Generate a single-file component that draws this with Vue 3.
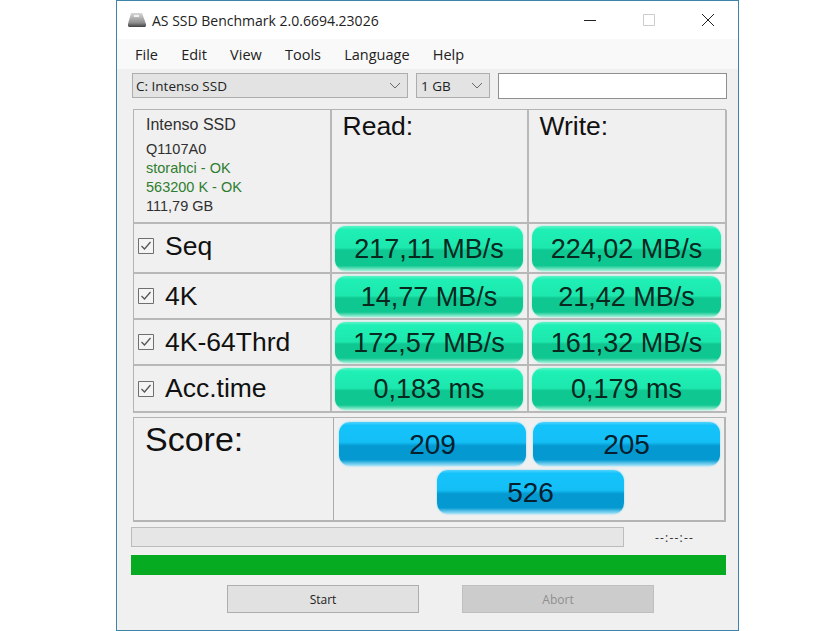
<script setup>
const rows = [
  { name: 'Seq', read: '217,11 MB/s', write: '224,02 MB/s', cls: 'r1' },
  { name: '4K', read: '14,77 MB/s', write: '21,42 MB/s', cls: 'r2' },
  { name: '4K-64Thrd', read: '172,57 MB/s', write: '161,32 MB/s', cls: 'r3' },
  { name: 'Acc.time', read: '0,183 ms', write: '0,179 ms', cls: 'r4' },
]
const menu = ['File', 'Edit', 'View', 'Tools', 'Language', 'Help']
</script>

<template>
  <div class="page">
    <div class="window">
      <header class="title">
        <svg class="appicon" width="20" height="16" viewBox="0 0 20 16">
          <defs>
            <linearGradient id="disk" x1="0" y1="0" x2="0" y2="1">
              <stop offset="0" stop-color="#d8d8d8" />
              <stop offset="0.7" stop-color="#8d8d8d" />
              <stop offset="1" stop-color="#3f3f3f" />
            </linearGradient>
          </defs>
          <path d="M4 1h11l4 11v2l-1 1H2l-1-1v-2z" fill="url(#disk)" />
          <path d="M7 3h5v2H7z" fill="#f2f2f2" />
        </svg>
        <span class="title-text">AS SSD Benchmark 2.0.6694.23026</span>
        <div class="controls">
          <svg width="14" height="14" viewBox="0 0 14 14"><path d="M1 7.500h12" stroke="#222" fill="none" /></svg>
          <svg width="14" height="14" viewBox="0 0 14 14"><path d="M1.500 1.500h11v11h-11z" stroke="#ccc" fill="none" /></svg>
          <svg width="14" height="14" viewBox="0 0 14 14"><path d="M1 1l12 12M13 1L1 13" stroke="#222" fill="none" /></svg>
        </div>
      </header>
      <nav class="menu"><span v-for="m in menu" :key="m">{{ m }}</span></nav>
      <main class="body">
        <div class="selectors">
          <div class="combo drive"><span>C: Intenso SSD</span><svg width="12" height="7" viewBox="0 0 12 7"><path d="M1 1l5 5 5-5" stroke="#666" fill="none" /></svg></div>
          <div class="combo size"><span>1 GB</span><svg width="12" height="7" viewBox="0 0 12 7"><path d="M1 1l5 5 5-5" stroke="#666" fill="none" /></svg></div>
          <div class="textbox"></div>
        </div>

        <section class="grid">
          <div class="cell info">
            <div class="model">Intenso SSD</div>
            <div>Q1107A0</div>
            <div class="ok">storahci - OK</div>
            <div class="ok">563200 K - OK</div>
            <div>111,79 GB</div>
          </div>
          <div class="cell head">Read:</div>
          <div class="cell head">Write:</div>
          <template v-for="r in rows" :key="r.name">
            <div class="cell label" :class="r.cls">
              <svg class="check" width="16" height="16" viewBox="0 0 16 16">
                <path d="M.5.500h15v15H.500z" fill="#f4f4f4" stroke="#6f6f6f" />
                <path d="M3.500 8l3 3 6-7" fill="none" stroke="#555" stroke-width="1.300" />
              </svg>
              <span>{{ r.name }}</span>
            </div>
            <div class="cell val"><div class="pill green">{{ r.read }}</div></div>
            <div class="cell val"><div class="pill green">{{ r.write }}</div></div>
          </template>
        </section>

        <section class="score">
          <div class="score-label">Score:</div>
          <div class="score-vals">
            <div class="pill blue">209</div>
            <div class="pill blue">205</div>
            <div class="pill blue total">526</div>
          </div>
        </section>

        <div class="progress-row">
          <div class="progress"></div>
          <span class="time">--:--:--</span>
        </div>
        <div class="bar"></div>
        <div class="buttons">
          <div class="btn">Start</div>
          <div class="btn off">Abort</div>
        </div>
      </main>
    </div>
  </div>
</template>

<style>
html, body { margin: 0; background: #fff; }
</style>

<style scoped>
.page { width: 819px; height: 631px; overflow: hidden; position: relative; background: #fff; }
.window {
  box-sizing: border-box; width: 623px; height: 631px; margin-left: 116px;
  border: 1px solid #3d84a8; background: #f0f0f0;
  display: flex; flex-direction: column;
  font-family: "Open Sans", "Noto Sans", sans-serif; color: #222;
}
.title { height: 38px; background: #fff; display: flex; align-items: center; padding-left: 10px; flex: none; }
.appicon { margin-right: 5px; }
.title-text { font-size: 14px; color: #222; }
.controls { margin-left: auto; display: flex; gap: 45px; padding-right: 23px; }
.menu { height: 30px; background: #f9f9f9; display: flex; align-items: center; gap: 23.200px; padding-left: 18px; font-size: 14.500px; flex: none; }
.body { padding: 4px 11px 0 14px; flex: 1; }
.selectors { display: flex; gap: 8px; height: 26px; margin-left: 1px; }
.combo {
  box-sizing: border-box; height: 25px; background: #e3e3e3; border: 1px solid #adadad;
  display: flex; align-items: center; justify-content: space-between;
  padding: 0 6px 0 3px; font-size: 13.500px;
}
.drive { width: 276px; }
.size { width: 74px; padding-left: 4px; }
.textbox { width: 229px; height: 26px; box-sizing: border-box; background: #fff; border: 1px solid #8f8f8f; }
.grid {
  margin: 10px 0 0 2px; width: 593px; box-sizing: border-box;
  display: grid; grid-template-columns: 198px 197px 198px; grid-template-rows: 114px 50px 46px 46px 47px;
  border-top: 1px solid #b4b4b4; border-left: 1px solid #b4b4b4;
}
.cell { box-sizing: border-box; border-right: 2px solid #b8b8b8; border-bottom: 2px solid #b8b8b8; min-width: 0; }
.info { padding: 5px 0 0 12px; font-family: "Liberation Sans", sans-serif; font-size: 14.500px; line-height: 19px; color: #2f2f2f; }
.model { font-size: 16px; margin-bottom: 5px; line-height: 20px; }
.ok { color: #2f7d2f; }
.head { font-family: "Liberation Sans", sans-serif; font-size: 26.500px; line-height: 30px; padding: 1px 0 0 10.500px; color: #111; }
.label { display: flex; align-items: center; padding-left: 4px; font-family: "Liberation Sans", sans-serif; font-size: 26.500px; color: #111; }
.r1 { padding-bottom: 4px; }
.check { margin-right: 11px; flex: none; }
.val { padding: 2px 4px 1px 3px; display: flex; }
.pill {
  box-sizing: border-box; width: 100%; height: 100%; border-radius: 11px; padding-top: 1px;
  display: flex; align-items: center; justify-content: center;
  font-family: "Liberation Sans", sans-serif; font-size: 27px; color: #06281f;
}
.green {
  background: linear-gradient(#5cf3c8 0, #1ff0b5 8%, #1de8ae 48%, #0fc791 54%, #0fc791 88%, #a5f3da 100%);
  box-shadow: 0 0 2px #7fe9cb;
}
.blue {
  background: linear-gradient(#4fd3fc 0, #14c3fb 8%, #14bff6 46%, #049ad1 54%, #049ad1 86%, #a8e5f9 100%);
  box-shadow: 0 0 2px #7ed6f5;
  color: #04202f; font-size: 28px;
}
.score {
  margin: 4px 0 0 2px; width: 593px; height: 105px; box-sizing: border-box;
  display: grid; grid-template-columns: 200px 393px;
  border: 1px solid #b4b4b4; border-bottom-width: 2px; border-right-width: 2px;
}
.score-label { font-family: "Liberation Sans", sans-serif; font-size: 34px; line-height: 38px; padding: 2px 0 0 11px; border-right: 1px solid #aaa; color: #111; }
.score-vals {
  display: grid; grid-template-columns: 187px 187px; grid-template-rows: 44px 44px;
  column-gap: 7px; row-gap: 4px; padding: 4px 0 0 5px;
}
.total { grid-column: 1 / 3; width: 187px; justify-self: start; margin-left: 98px; }
.progress-row { display: flex; align-items: center; margin-top: 5px; height: 20px; }
.progress { width: 493px; height: 20px; box-sizing: border-box; background: #e6e6e6; border: 1px solid #bcbcbc; }
.time { margin-left: 31px; font-size: 12px; letter-spacing: 1.200px; color: #333; }
.bar { margin-top: 8px; width: 595px; height: 20px; background: #06ab22; }
.buttons { margin-top: 10px; display: flex; padding-left: 96px; gap: 43px; }
.btn {
  width: 192px; height: 28px; box-sizing: border-box; background: #e1e1e1; border: 1px solid #adadad;
  display: flex; align-items: center; justify-content: center; font-size: 12px; color: #222;
}
.off { background: #cccccc; border-color: #bfbfbf; color: #8f8f8f; }
</style>
